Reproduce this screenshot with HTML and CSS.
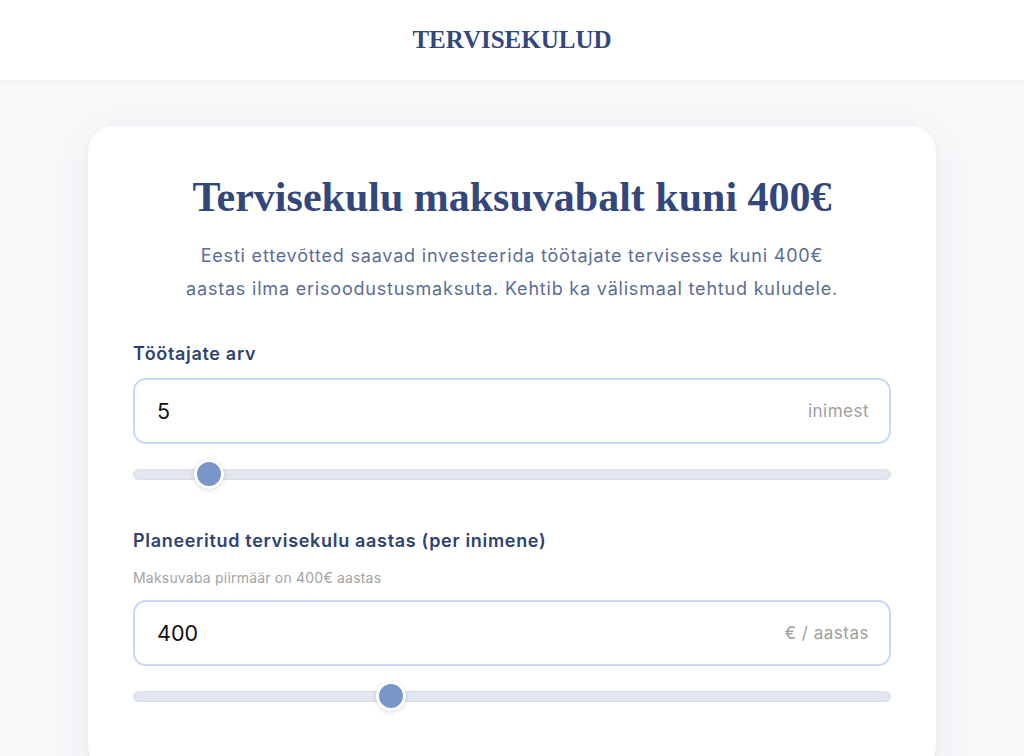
FILE: index.html
```html
<!DOCTYPE html>
<html lang="et">
<head>
<meta charset="utf-8">
<title>Tervisekulud</title>
<link rel="stylesheet" href="styles.css">
</head>
<body>
<header class="site-header">
  <div class="brand">TERVISEKULUD</div>
</header>
<main class="page">
  <section class="card">
    <h1 class="title">Tervisekulu maksuvabalt kuni 400€</h1>
    <p class="lead">Eesti ettevõtted saavad investeerida töötajate tervisesse kuni 400€<br>aastas ilma erisoodustusmaksuta. Kehtib ka välismaal tehtud kuludele.</p>

    <div class="field">
      <label class="label" for="people">Töötajate arv</label>
      <div class="input-box">
        <input id="people" class="input" type="text" value="5">
        <span class="unit">inimest</span>
      </div>
      <input class="range" type="range" min="0" max="60" value="5">
    </div>

    <div class="field field-second">
      <label class="label" for="cost">Planeeritud tervisekulu aastas (per inimene)</label>
      <div class="hint">Maksuvaba piirmäär on 400€ aastas</div>
      <div class="input-box">
        <input id="cost" class="input" type="text" value="400">
        <span class="unit">€ / aastas</span>
      </div>
      <input class="range" type="range" min="0" max="1200" value="400">
    </div>
  </section>
</main>
</body>
</html>
```

FILE: styles.css
```css
* { box-sizing: border-box; }

html, body {
  margin: 0;
  padding: 0;
}

body {
  background: #f7f8fa;
  font-family: Inter, "Noto Sans", sans-serif;
  color: #2f4272;
  height: 756px;
  overflow: hidden;
}

.site-header {
  background: #ffffff;
  height: 80px;
  display: flex;
  align-items: center;
  justify-content: center;
  box-shadow: 0 1px 3px rgba(30, 40, 70, 0.04);
}

.brand {
  font-family: "Liberation Serif", "Times New Roman", serif;
  font-weight: 700;
  font-size: 25px;
  color: #34477a;
}

.page {
  display: flex;
  justify-content: center;
  padding-top: 46px;
}

.card {
  width: 848px;
  background: #ffffff;
  border-radius: 26px;
  padding: 43px 45px 60px;
  box-shadow: 0 10px 40px rgba(40, 50, 90, 0.06), 0 2px 8px rgba(40, 50, 90, 0.03);
}

.title {
  margin: 0;
  text-align: center;
  font-family: "Liberation Serif", "Times New Roman", serif;
  font-weight: 700;
  font-size: 42px;
  line-height: 56px;
  color: #34477a;
}

.lead {
  margin: 14px 0 0;
  text-align: center;
  font-size: 18px;
  letter-spacing: 0.8px;
  line-height: 33px;
  color: #5a6d96;
}

.field {
  margin-top: 37px;
  display: flex;
  flex-direction: column;
}

.field-second {
  margin-top: 40px;
}

.label {
  font-size: 18px;
  letter-spacing: 0.68px;
  font-weight: 600;
  color: #2f4272;
  line-height: 24px;
}

.hint {
  margin-top: 15px;
  font-size: 14px;
  letter-spacing: 0.2px;
  line-height: 20px;
  color: #a3a3a3;
}

.input-box {
  margin-top: 12px;
  height: 66px;
  border: 2px solid #c6daf6;
  border-radius: 13px;
  display: flex;
  align-items: center;
  padding: 0 20px 0 22px;
  background: #ffffff;
}

.input {
  flex: 1;
  border: 0;
  outline: 0;
  background: transparent;
  font-family: Inter, "Noto Sans", sans-serif;
  font-size: 21.5px;
  color: #111111;
  padding: 0;
  min-width: 0;
}

.unit {
  font-size: 17px;
  letter-spacing: 0.5px;
  color: #9e9e9e;
}

.range {
  -webkit-appearance: none;
  appearance: none;
  width: 100%;
  height: 30px;
  margin: 15px 0 0;
  background: transparent;
}

.range::-webkit-slider-runnable-track {
  height: 11px;
  background: #e2e6ee;
  border: 1px solid #d9dee7;
  border-radius: 6px;
}

.range::-webkit-slider-thumb {
  -webkit-appearance: none;
  appearance: none;
  width: 30px;
  height: 30px;
  margin-top: -10.5px;
  border-radius: 50%;
  background: #7896c8;
  border: 3px solid #ffffff;
  box-shadow: 0 1px 4px rgba(30, 40, 70, 0.18);
}
```
